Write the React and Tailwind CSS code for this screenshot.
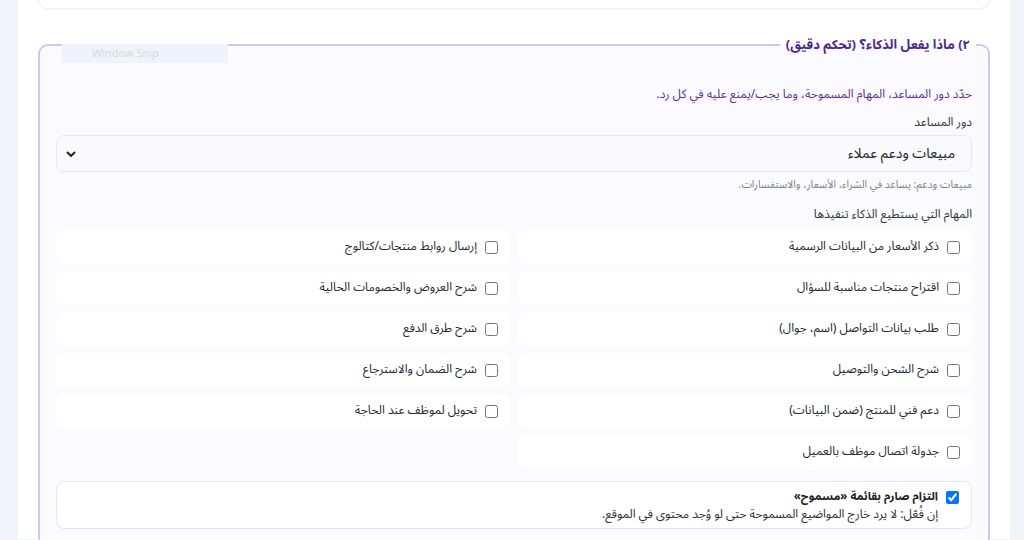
import React from "react";

const right = [
  "ذكر الأسعار من البيانات الرسمية",
  "اقتراح منتجات مناسبة للسؤال",
  "طلب بيانات التواصل (اسم، جوال)",
  "شرح الشحن والتوصيل",
  "دعم فني للمنتج (ضمن البيانات)",
  "جدولة اتصال موظف بالعميل",
];
const left = [
  "إرسال روابط منتجات/كتالوج",
  "شرح العروض والخصومات الحالية",
  "شرح طرق الدفع",
  "شرح الضمان والاسترجاع",
  "تحويل لموظف عند الحاجة",
];

const tasks = [];
for (let i = 0; i < right.length; i++) {
  tasks.push(right[i]);
  if (left[i]) tasks.push(left[i]);
}

export default function App() {
  return (
    <div
      dir="rtl"
      className="w-[1024px] h-[540px] overflow-hidden bg-[#f1f4f8] font-['Noto_Sans_Arabic','Noto_Sans_Arabic_UI','Noto_Sans',sans-serif] text-[#1f2328]"
    >
      <div className="mr-[14px] ml-[18px] h-full bg-white px-5 relative">
        <div className="h-[10px] -mt-px rounded-b-xl border border-t-0 border-[#eceef2] bg-white shadow-[0_1px_2px_rgba(0,0,0,0.03)]" />
        <fieldset className="mt-[26px] rounded-[10px] border-2 border-[#cfc8f3] bg-[#fbfbff] px-4 pb-4 pt-[30px]">
          <legend className="mr-[-4px] px-1.5 text-[13px] font-bold text-[#4b2a8c] leading-5">
            ٢) ماذا يفعل الذكاء؟ (تحكم دقيق)
          </legend>
          <p className="text-[12px] leading-5 text-[#5b2b91]">
            حدّد دور المساعد، المهام المسموحة، وما يجب/يمنع عليه في كل رد.
          </p>
          <div className="mt-[8px] text-[12px] leading-5 text-[#2f3338]">دور المساعد</div>
          <div className="mt-[2px] flex h-[37px] items-center justify-between rounded-lg border border-[#e8e9ef] bg-[#fafafd] pr-4 pl-2">
            <span className="text-[14px] text-[#202328]">مبيعات ودعم عملاء</span>
            <svg width="12" height="12" viewBox="0 0 12 12" className="text-[#202328]">
              <path d="M2.5 4.5 L6 8 L9.5 4.5" fill="none" stroke="currentColor" strokeWidth="2" strokeLinecap="round" strokeLinejoin="round" />
            </svg>
          </div>
          <div className="mt-[5px] text-[10.5px] leading-4 text-[#7a7f87]">
            مبيعات ودعم: يساعد في الشراء، الأسعار، والاستفسارات.
          </div>
          <div className="mt-[12px] text-[12px] leading-5 text-[#2f3338]">المهام التي يستطيع الذكاء تنفيذها</div>
          <div className="mt-[5px] grid grid-cols-2 gap-x-2 gap-y-[7px]">
            {tasks.map((t) => (
              <label
                key={t}
                className="flex h-[34px] items-center gap-2 rounded-lg bg-white pr-3 text-[12px] text-[#24282d]"
              >
                <input type="checkbox" className="m-0 h-[13px] w-[13px]" />
                <span>{t}</span>
              </label>
            ))}
          </div>
          <div className="mt-[12px] flex items-start gap-2 rounded-lg border border-[#e6e7ee] bg-white pr-[12px] pt-[5px] pb-[4px]">
            <input type="checkbox" defaultChecked className="m-0 mt-[4px] h-[13px] w-[13px]" />
            <div>
              <div className="text-[11.5px] leading-[18px] font-bold text-[#1c1f23]">التزام صارم بقائمة «مسموح»</div>
              <div className="text-[12px] leading-[19px] text-[#2a2e33]">
                إن فُعّل: لا يرد خارج المواضيع المسموحة حتى لو وُجد محتوى في الموقع.
              </div>
            </div>
          </div>
        </fieldset>
        <div
          dir="ltr"
          className="absolute left-[44px] top-[45px] flex h-[19px] w-[166px] items-center bg-[#eef3fc] pl-[30px] text-[11px] text-[#d3d8e0] font-['Open_Sans',sans-serif]"
        >
          Window Snip
        </div>
      </div>
    </div>
  );
}
